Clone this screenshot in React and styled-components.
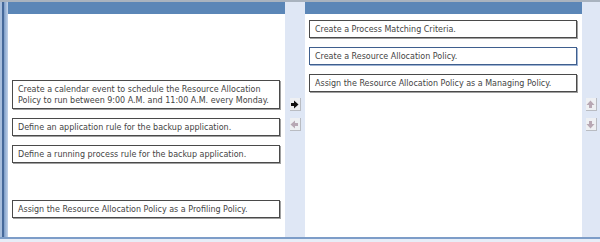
import styled, { createGlobalStyle } from "styled-components";

const GlobalStyle = createGlobalStyle`
  html, body {
    margin: 0;
    padding: 0;
    background: #e3eaf6;
  }
  body {
    font-family: Tahoma, "DejaVu Sans", sans-serif;
  }
`;

const leftItems = [
  "Create a calendar event to schedule the Resource Allocation Policy to run between 9:00 A.M. and 11:00 A.M. every Monday.",
  "Define an application rule for the backup application.",
  "Define a running process rule for the backup application.",
  null,
  "Assign the Resource Allocation Policy as a Profiling Policy.",
];

const rightItems = [
  { text: "Create a Process Matching Criteria." },
  { text: "Create a Resource Allocation Policy.", focused: true },
  { text: "Assign the Resource Allocation Policy as a Managing Policy." },
];

const Arrow = ({ dir, active }) => {
  const rot = { right: 0, left: 180, up: -90, down: 90 }[dir];
  const fill = active ? "#111" : "#b8a8b4";
  return (
    <svg width="9" height="9" viewBox="0 0 9 9">
      <g transform={`rotate(${rot} 4.5 4.5)`}>
        <path d="M1 3h3V0.5L8.5 4.5 4 8.5V6H1z" fill={fill} />
      </g>
    </svg>
  );
};

const App = () => {
  return (
    <>
      <GlobalStyle />
      <Screen>
        <TopStrip />
        <Frame>
          <LeftEdge />
          <Panel>
            <Header />
            <List $top={66}>
              {leftItems.map((t, i) =>
                t ? <Item key={i}>{t}</Item> : <EmptySlot key={i} />
              )}
            </List>
          </Panel>
          <Gutter>
            <ArrowButton>
              <Arrow dir="right" active />
            </ArrowButton>
            <ArrowButton>
              <Arrow dir="left" />
            </ArrowButton>
          </Gutter>
          <Panel>
            <Header />
            <List $top={6}>
              {rightItems.map((it, i) => (
                <Item key={i} $focused={it.focused}>
                  {it.text}
                </Item>
              ))}
            </List>
          </Panel>
          <Gutter $right>
            <ArrowButton>
              <Arrow dir="up" />
            </ArrowButton>
            <ArrowButton>
              <Arrow dir="down" />
            </ArrowButton>
          </Gutter>
        </Frame>
        <BottomLine />
      </Screen>
    </>
  );
};

export default App;

const Screen = styled.div`
  width: 600px;
  height: 242px;
  display: flex;
  flex-direction: column;
  overflow: hidden;
  background: #e3eaf6;
`;

const TopStrip = styled.div`
  height: 2px;
  background: #a9b3bf;
`;

const Frame = styled.div`
  flex: 1;
  display: flex;
`;

const LeftEdge = styled.div`
  width: 8px;
  background: linear-gradient(
    to right,
    #a8bedc 0px,
    #a8bedc 2px,
    #46699a 2px,
    #46699a 4px,
    #7d9dc8 4px,
    #c4d4ea 8px
  );
`;

const Panel = styled.div`
  width: 277px;
  display: flex;
  flex-direction: column;
  background: #ffffff;
`;

const Header = styled.div`
  height: 12px;
  background: #5b86b7;
`;

const List = styled.div`
  display: flex;
  flex-direction: column;
  gap: 9px;
  padding: ${(p) => p.$top}px 4px 0 4px;
`;

const Item = styled.div`
  border: 1px solid ${(p) => (p.$focused ? "#3f5f8e" : "#4a4a4a")};
  box-shadow: 1px 1px 0 ${(p) => (p.$focused ? "#9fb4d4" : "#a0a0a0")};
  background: #fff;
  color: #444;
  font-size: 8px;
  line-height: 11px;
  padding: 3px 5px 2px 5px;
  margin-right: 1px;
`;

const EmptySlot = styled.div`
  height: 19px;
`;

const Gutter = styled.div`
  width: ${(p) => (p.$right ? "18px" : "20px")};
  display: flex;
  flex-direction: column;
  align-items: center;
  gap: 7px;
  padding-top: 96px;
  background: #dfe7f5;
`;

const ArrowButton = styled.div`
  width: 11px;
  height: 13px;
  display: flex;
  align-items: center;
  justify-content: center;
  background: #eef0f3;
  border-right: 1px solid #b9bcc2;
  border-bottom: 1px solid #b9bcc2;
  box-sizing: border-box;
`;

const BottomLine = styled.div`
  height: 5px;
  border-top: 2px solid #7d9dc8;
  background: #e7edf7;
  box-sizing: border-box;
`;
